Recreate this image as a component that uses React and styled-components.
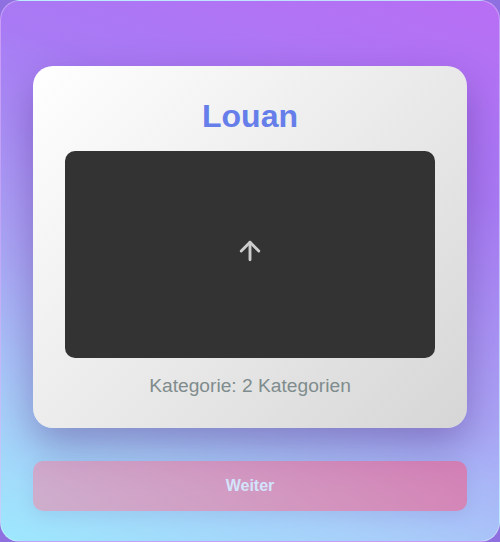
import React from "react";
import styled, { createGlobalStyle } from "styled-components";
import { ArrowUp } from "lucide-react";

const GlobalStyle = createGlobalStyle`
  html, body {
    margin: 0;
    padding: 0;
    background: #8f70e0;
  }
  body {
    font-family: "Liberation Sans", Arial, sans-serif;
  }
  * {
    box-sizing: border-box;
  }
`;

const Frame = styled.div`
  width: 500px;
  height: 542px;
  border-radius: 20px;
  border: 1px solid rgba(255, 255, 255, 0.3);
  background: linear-gradient(200deg, #b86ef4 0%, #a87af4 28%, #aaa4f5 58%, #a8cdf9 80%, #9de8fd 100%);
  padding: 65px 32px 0;
  display: flex;
  flex-direction: column;
  gap: 33px;
  overflow: hidden;
`;

const Card = styled.div`
  background: linear-gradient(135deg, #ffffff 0%, #d6d6d6 100%);
  border-radius: 20px;
  padding: 32px 32px 31px;
  box-shadow: 0 18px 40px rgba(60, 20, 110, 0.35);
  display: flex;
  flex-direction: column;
  align-items: center;
`;

const Title = styled.h1`
  margin: 0 0 16px;
  font-size: 32px;
  line-height: 37px;
  font-weight: 700;
  color: #667eea;
`;

const Preview = styled.div`
  width: 100%;
  height: 207px;
  background: #333333;
  border-radius: 10px;
  display: flex;
  align-items: center;
  justify-content: center;
  color: #cccccc;

  svg {
    margin-bottom: 8px;
  }
`;

const Caption = styled.p`
  margin: 17px 0 0;
  font-size: 19.2px;
  line-height: 22px;
  color: #7f8c8d;
`;

const NextButton = styled.button`
  height: 50px;
  border: none;
  border-radius: 10px;
  background: linear-gradient(100deg, #fb7ea0 0%, #ff5078 100%);
  opacity: 0.5;
  color: #ffffff;
  font-family: "Liberation Sans", Arial, sans-serif;
  font-size: 16px;
  font-weight: 700;
  box-shadow: 0 6px 16px rgba(60, 20, 110, 0.15);
`;

export default function App() {
  return (
    <>
      <GlobalStyle />
      <Frame>
        <Card>
          <Title>Louan</Title>
          <Preview>
            <ArrowUp size={30} strokeWidth={2.3} />
          </Preview>
          <Caption>Kategorie: 2 Kategorien</Caption>
        </Card>
        <NextButton disabled>Weiter</NextButton>
      </Frame>
    </>
  );
}
